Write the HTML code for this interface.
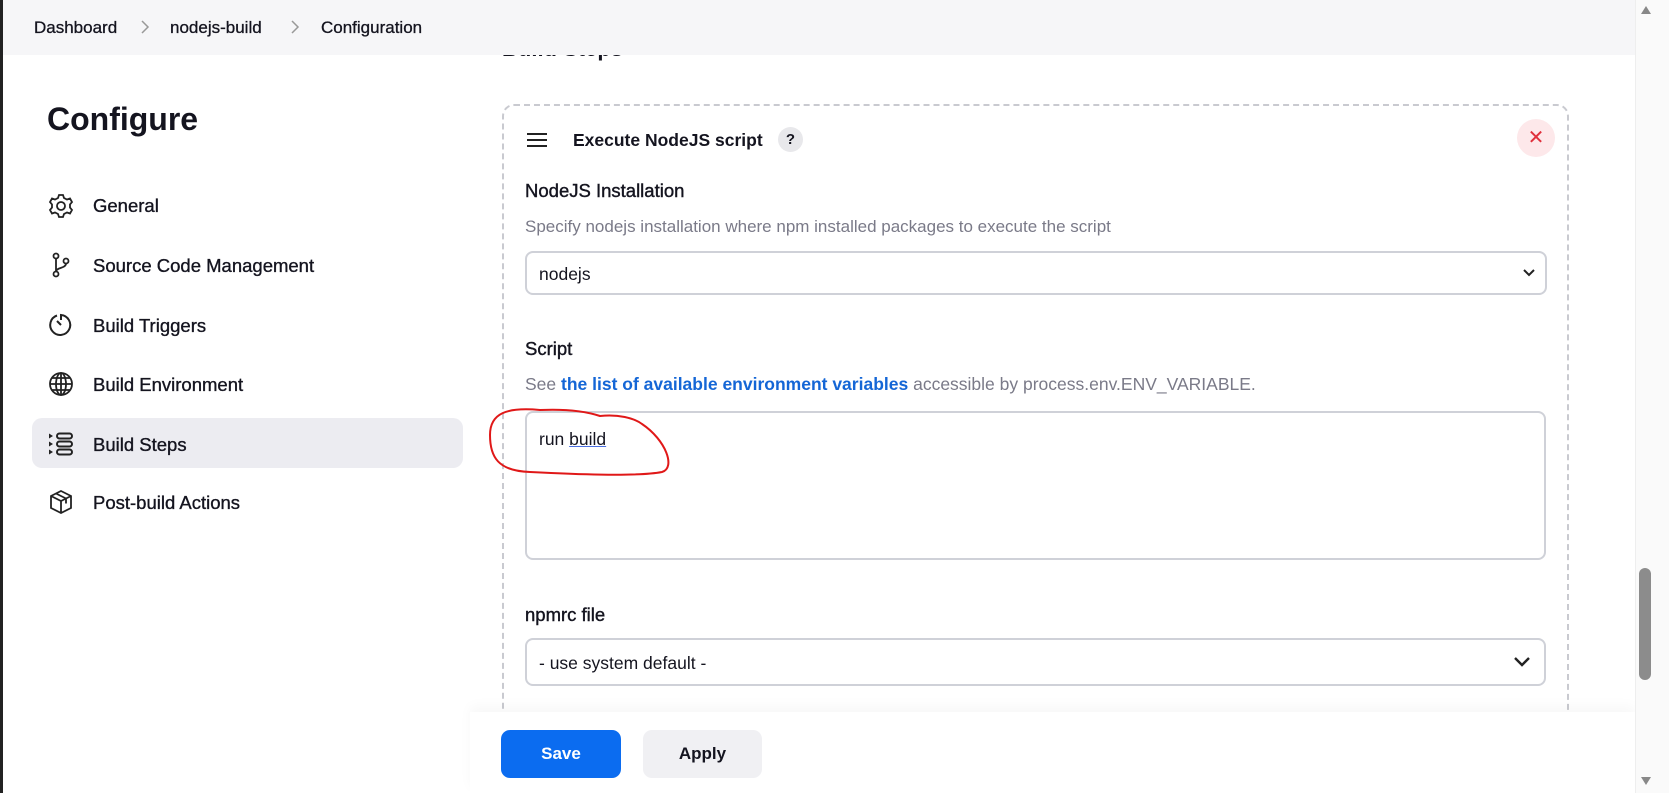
<!DOCTYPE html>
<html><head><meta charset="utf-8"><style>
*{box-sizing:border-box;margin:0;padding:0}
body{width:1669px;height:793px;overflow:hidden;background:#fff;font-family:"Liberation Sans",sans-serif;color:#14141f;position:relative}
.abs{position:absolute}
.bc{left:0;top:0;width:1635px;height:55px;background:#f6f6f8;font-size:17px;z-index:5;-webkit-text-stroke:.3px #14141f}
.bc span{position:absolute;top:18px}
.nav{font-size:18.5px;left:93px;-webkit-text-stroke:.35px #14141f}
.ico{left:48px;width:26px;height:26px}
.lbl{font-size:17.5px;font-weight:bold;left:525px}
.desc{font-size:17px;color:#7a7a88;left:525px}
.field{border:2px solid #cfd1d8;border-radius:8px;background:#fff}
</style></head><body>
<div class="abs" style="left:0;top:0;width:3px;height:793px;background:#222;z-index:9"></div>
<div class="abs bc">
<span style="left:34px">Dashboard</span>
<svg class="abs" style="left:141px;top:20px" width="9" height="14" viewBox="0 0 9 14" fill="none" stroke="#999" stroke-width="1.5"><path d="M1 1l6 6-6 6"/></svg>
<span style="left:170px">nodejs-build</span>
<svg class="abs" style="left:291px;top:20px" width="9" height="14" viewBox="0 0 9 14" fill="none" stroke="#999" stroke-width="1.5"><path d="M1 1l6 6-6 6"/></svg>
<span style="left:321px">Configuration</span>
</div>
<div class="abs" style="left:502px;top:36px;font-size:22px;font-weight:bold">Build Steps</div>
<div class="abs" style="left:47px;top:101px;font-size:32px;font-weight:bold">Configure</div>
<div class="abs" style="left:32px;top:418px;width:431px;height:50px;background:#ececf1;border-radius:10px"></div>
<svg class="abs ico" style="top:193px" viewBox="0 0 26 26" fill="none" stroke="#222" stroke-width="1.8"><circle cx="13" cy="13" r="4"/><path d="M11 2h4l1 3 3 1.5 3-1 2 3.5-2 2.5v3l2 2.5-2 3.5-3-1-3 1.5-1 3h-4l-1-3-3-1.5-3 1-2-3.5 2-2.5v-3l-2-2.5 2-3.5 3 1 3-1.5z"/></svg>
<span class="abs nav" style="top:195px">General</span>
<svg class="abs ico" style="top:252px" viewBox="0 0 26 26" fill="none" stroke="#222" stroke-width="1.8"><circle cx="8" cy="4" r="2.5"/><circle cx="8" cy="22" r="2.5"/><circle cx="18" cy="9" r="2.5"/><path d="M8 6.5v13M18 11.5c0 5-10 4-10 8"/></svg>
<span class="abs nav" style="top:255px">Source Code Management</span>
<svg class="abs ico" style="top:312px" viewBox="0 0 26 26" fill="none" stroke="#222" stroke-width="2"><path d="M9 3.5A10 10 0 1 0 13 3v5"/><path d="M9 9l4 4"/></svg>
<span class="abs nav" style="top:315px">Build Triggers</span>
<svg class="abs ico" style="top:371px" viewBox="0 0 26 26" fill="none" stroke="#222" stroke-width="1.8"><circle cx="13" cy="13" r="11"/><ellipse cx="13" cy="13" rx="5" ry="11"/><path d="M2 13h22M4 7h18M4 19h18M13 2v22"/></svg>
<span class="abs nav" style="top:374px">Build Environment</span>
<svg class="abs ico" style="top:431px" viewBox="0 0 26 26" fill="#222" stroke="#222" stroke-width="2"><path d="M1 2.5l4 2.5-4 2.5zM1 10.5l4 2.5-4 2.5zM1 18.5l4 2.5-4 2.5z" stroke="none"/><rect x="9" y="2.5" width="15" height="5" rx="2.5" fill="none"/><rect x="9" y="10.5" width="15" height="5" rx="2.5" fill="none"/><rect x="9" y="18.5" width="15" height="5" rx="2.5" fill="none"/></svg>
<span class="abs nav" style="top:434px">Build Steps</span>
<svg class="abs ico" style="top:489px" viewBox="0 0 26 26" fill="none" stroke="#222" stroke-width="1.8"><path d="M13 2l10 5v12l-10 5-10-5V7zM3 7l10 5 10-5M13 12v12M8 4.5l10 5v5"/></svg>
<span class="abs nav" style="top:492px">Post-build Actions</span>

<div class="abs" style="left:502px;top:104px;width:1067px;height:660px;border:2px dashed #c9cad0;border-radius:12px"></div>
<svg class="abs" style="left:527px;top:132px" width="20" height="16" viewBox="0 0 20 16" stroke="#222" stroke-width="2"><path d="M0 2h20M0 8h20M0 14h20"/></svg>
<div class="abs" style="left:573px;top:130px;font-size:17.5px;font-weight:bold">Execute NodeJS script</div>
<div class="abs" style="left:778px;top:127px;width:25px;height:25px;border-radius:50%;background:#e8e8eb;font-size:15px;font-weight:bold;text-align:center;line-height:25px">?</div>
<div class="abs" style="left:1517px;top:119px;width:38px;height:38px;border-radius:50%;background:#fde8ea;color:#e0303c;text-align:center;line-height:38px;font-size:20px">✕</div>
<div class="abs lbl" style="top:180px;font-weight:normal;font-size:18.5px;-webkit-text-stroke:.4px #14141f">NodeJS Installation</div>
<div class="abs desc" style="top:217px">Specify nodejs installation where npm installed packages to execute the script</div>
<div class="abs field" style="left:525px;top:251px;width:1022px;height:44px"><span class="abs" style="left:12px;top:11px;font-size:17.5px">nodejs</span><svg class="abs" style="right:10px;top:16px" width="12" height="8" viewBox="0 0 12 8" fill="none" stroke="#222" stroke-width="2"><path d="M1 1l5 5 5-5"/></svg></div>
<div class="abs lbl" style="top:338px;font-weight:normal;font-size:18.5px;-webkit-text-stroke:.4px #14141f">Script</div>
<div class="abs desc" style="top:374px;font-size:17.5px">See <b style="color:#1466d6">the list of available environment variables</b> accessible by process.env.ENV_VARIABLE.</div>
<div class="abs field" style="left:525px;top:411px;width:1021px;height:149px"><span class="abs" style="left:12px;top:16px;font-size:17.5px">run <u style="text-decoration-color:#4a6ee0">build</u></span></div>
<svg class="abs" style="left:485px;top:405px" width="200" height="80" viewBox="0 0 200 80" fill="none" stroke="#e01818" stroke-width="2"><path d="M55 5C22 2 5 8 5 30c0 22 8 36 40 37 40 2 106 5 132 0 14-4 4-32-20-48-8-6-24-10-42-8C100 6 78 4 55 5z"/></svg>
<div class="abs lbl" style="top:604px;font-weight:normal;font-size:18.5px;-webkit-text-stroke:.4px #14141f">npmrc file</div>
<div class="abs field" style="left:525px;top:638px;width:1021px;height:48px"><span class="abs" style="left:12px;top:13px;font-size:17.5px">- use system default -</span><svg class="abs" style="right:14px;top:17px" width="16" height="10" viewBox="0 0 16 10" fill="none" stroke="#222" stroke-width="2.4"><path d="M1 1l7 7 7-7"/></svg></div>

<div class="abs" style="left:470px;top:712px;width:1165px;height:81px;background:#fff;box-shadow:0 -6px 12px rgba(0,0,0,.03)"></div>
<div class="abs" style="left:501px;top:730px;width:120px;height:48px;background:#0b6cf0;border-radius:9px;color:#fff;font-weight:bold;font-size:17px;text-align:center;line-height:48px">Save</div>
<div class="abs" style="left:643px;top:730px;width:119px;height:48px;background:#f0f0f3;border-radius:9px;font-weight:bold;font-size:17px;text-align:center;line-height:48px">Apply</div>

<div class="abs" style="left:1635px;top:0;width:34px;height:793px;background:#fafafa;border-left:1px solid #eee"></div>
<div class="abs" style="left:1639px;top:568px;width:12px;height:112px;background:#8c8c8c;border-radius:6px"></div>
<div class="abs" style="left:1641px;top:6px;width:0;height:0;border-left:5px solid transparent;border-right:5px solid transparent;border-bottom:8px solid #888"></div>
<div class="abs" style="left:1641px;top:777px;width:0;height:0;border-left:5px solid transparent;border-right:5px solid transparent;border-top:8px solid #888"></div>
</body></html>
